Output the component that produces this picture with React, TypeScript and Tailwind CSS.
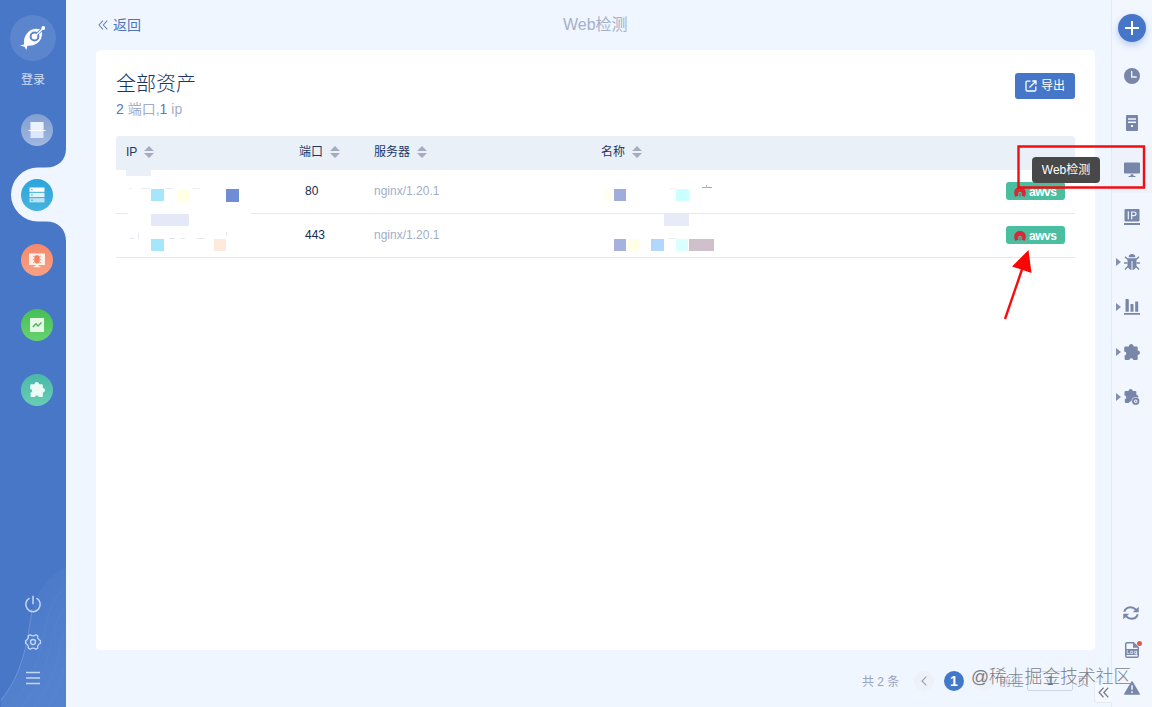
import React from "react";

const FONT =
  "font-['Liberation_Sans','Noto_Sans_CJK_SC',sans-serif]";

const PUZZLE =
  "M1.500 2.400H4.800C5 .9 5.900 0 7.200 0S9.500.9 9.700 2.400H12.500Q13.700 2.400 13.700 3.600V6.500C15.200 6.700 16 7.600 16 8.800S15.200 10.900 13.700 11.100V14.800Q13.700 16 12.500 16H9.300C9.200 15 8.400 14.300 7.300 14.300S5.400 15 5.300 16H1.800Q.6 16 .6 14.800V11.500C1.700 11.300 2.300 10.300 2.200 9.300S1.400 7.600.2 7.500V3.700Q.2 2.400 1.500 2.400Z";

function Svg({ size = 16, className = "", children }: { size?: number; className?: string; children: React.ReactNode }) {
  return (
    <svg width={size} height={size} viewBox="0 0 16 16" className={"shrink-0 " + className} fill="currentColor">
      {children}
    </svg>
  );
}

function DoubleLeft({ size = 10 }: { size?: number }) {
  return (
    <svg width={size} height={size} viewBox="0 0 10 10" fill="none" stroke="currentColor" strokeWidth="1.100">
      <path d="M5 .7L1 5l4 4.300M9.300.7L5.300 5l4 4.300" />
    </svg>
  );
}

function Sorter() {
  return (
    <svg width="10" height="12" viewBox="0 0 10 12" fill="#a3adbf">
      <path d="M5 0L10 5H0ZM5 12L0 7H10Z" />
    </svg>
  );
}

function NavItem({ tone, children }: { tone: string; children: React.ReactNode }) {
  return (
    <div className="flex h-[65px] items-center justify-center pl-2">
      <div className={"relative flex size-8 items-center justify-center rounded-full " + tone}>{children}</div>
    </div>
  );
}

function Sidebar() {
  return (
    <aside className="relative flex w-[66px] shrink-0 flex-col overflow-hidden bg-[#4877c7]">
      <svg className="absolute bottom-0 left-0" width="66" height="150" viewBox="0 0 66 150">
        <defs>
          <linearGradient id="wave" x1="0" y1="0" x2=".4" y2="1">
            <stop offset="0" stopColor="#6f9be0" stopOpacity="0" />
            <stop offset="1" stopColor="#6f9be0" stopOpacity=".3" />
          </linearGradient>
        </defs>
        <path d="M66 10C48 20 37 34 32 55C26 94 19 122 1 142V150H66Z" fill="url(#wave)" />
        <path d="M32 52C27 92 20 120 1 143" fill="none" stroke="#86aae6" strokeOpacity=".5" />
        <g fill="none" stroke="#85aae5" strokeOpacity=".1">
          <path d="M66 30C48 42 45 74 40 95S25 132 9 150M66 50C54 60 52 87 46 106S32 137 22 150M66 72C59 87 58 108 51 122S41 141 34 150M66 98C64 118 58 136 48 150" />
        </g>
      </svg>
      <div className="flex h-[97px] flex-col items-center pt-[15px]">
        <div className="flex size-[46px] shrink-0 items-center justify-center rounded-full bg-[#5b85cd] text-white">
          <svg width="28" height="28" viewBox="0 0 28 28" fill="none">
            <path d="M5 20.500C4 11.500 10 5 16.500 4.700Q19 4.500 22.500 6Q24 10 22.300 14C20 19.500 14 22.500 8.500 21.500L7.300 26L5.500 22.800L1 21.600Z" fill="white" />
            <circle cx="15.500" cy="12.500" r="3.900" stroke="#5b85cd" strokeWidth="2" />
            <path d="M18 10L22.500 6" stroke="#5b85cd" strokeWidth="3" />
            <path d="M17.500 10.700L24 4.500" stroke="white" strokeWidth="1.200" />
            <circle cx="24.300" cy="4" r="1.900" fill="white" />
          </svg>
        </div>
        <span className="mt-[9px] text-xs leading-[20px] text-[#d2e0f7]">登录</span>
      </div>
      <NavItem tone="bg-linear-to-b from-[#829fd2] to-[#a1b8de]">
        <svg width="18" height="18" viewBox="0 0 18 18">
          <path d="M2.500 1h13v16H2.500Z" fill="#dbe8ff" />
          <path d="M2.500 1h13v7.500H2.500Z" fill="white" fillOpacity=".45" />
          <path d="M.500 9.500h17" stroke="white" strokeWidth="1" />
        </svg>
      </NavItem>
      <div className="relative flex h-[65px] items-center justify-center pl-2">
        <svg className="absolute left-0 top-[-13px]" width="66" height="92" viewBox="0 0 66 92">
          <path d="M66 0C66 11 58 18.500 46 18.500H38A27 27 0 0 0 38 72.500H46C58 72.500 66 80 66 92Z" fill="#f0f6ff" />
        </svg>
        <div className="relative flex size-8 items-center justify-center rounded-full bg-linear-to-b from-[#29a5dc] to-[#45b3dd]">
          <Svg className="text-white">
            <path d="M.5.500h15v4.300H.5Z" />
            <path d="M.5 5.800h15v4.300H.5Z" fillOpacity=".85" />
            <path d="M.5 11.100h15v4.300H.5Z" fillOpacity=".65" />
            <path d="M2.300 2h1.300v1.300H2.300ZM2.300 7.300h1.300v1.300H2.300ZM2.300 12.600h1.300v1.300H2.300Z" fill="#36acdb" />
          </Svg>
        </div>
      </div>
      <NavItem tone="bg-linear-to-b from-[#f58a6b] to-[#f7a084]">
        <Svg className="text-[#fff1ea]">
          <path d="M0 1.500h16v11.500H9.500v1.200h2v1H4.500v-1h2V13H0Z" />
          <g stroke="#f5916f" fill="none" strokeWidth=".8">
            <path d="M4 3.800l1.500 1.200M12 3.800l-1.500 1.200M3.700 7.500h1.800M10.500 7.500h1.800M4 11l1.700-1.300M12 11l-1.700-1.300" />
          </g>
          <path d="M5.300 4.800C5.300 2.800 10.700 2.800 10.700 4.800V9.500C10 12.200 6 12.200 5.300 9.500Z" fill="#f28361" />
        </Svg>
      </NavItem>
      <NavItem tone="bg-linear-to-b from-[#46bf55] to-[#66d26f]">
        <svg width="14" height="14" viewBox="0 0 14 14">
          <path d="M0 0h14v14H0Z" fill="#e6f8e8" />
          <path d="M2.800 9L6 5.700L8 8L11.500 4.500" stroke="#43b854" strokeWidth="1.300" fill="none" />
        </svg>
      </NavItem>
      <NavItem tone="bg-linear-to-b from-[#49b8aa] to-[#68cdb4]">
        <Svg size={15} className="text-[#ecfbf6]">
          <path d={PUZZLE} />
        </Svg>
      </NavItem>
      <div className="relative mt-auto flex flex-col items-center text-[#c4d8f6]">
        <svg className="mb-[20px]" width="18" height="18" viewBox="0 0 18 18" fill="none" stroke="currentColor" strokeWidth="1.500">
          <path d="M5.500 3.200A7.200 7.200 0 1 0 12.500 3.200M9 .8v8.400" />
        </svg>
        <svg className="mb-[20px]" width="18" height="18" viewBox="0 0 18 18" fill="none" stroke="currentColor" strokeWidth="1.300">
          <path d="M6.200 1.800Q9 4 11.800 1.800L13.700 2.900Q13.200 6.300 16.400 7.500V10.500Q13.200 11.700 13.700 15.100L11.800 16.200Q9 14 6.200 16.200L4.300 15.100Q4.800 11.700 1.600 10.500V7.500Q4.800 6.300 4.300 2.900Z" strokeLinejoin="round" />
          <circle cx="9" cy="9" r="2.500" />
        </svg>
        <svg className="mb-[22px]" width="14" height="14" viewBox="0 0 14 14" fill="none" stroke="currentColor" strokeWidth="1.300">
          <path d="M0 1.500h14M0 7h14M0 12.500h14" />
        </svg>
      </div>
    </aside>
  );
}

function Awvs() {
  return (
    <div className="flex h-[18px] w-[59px] items-center gap-[3px] rounded-[3px] bg-[#49bea0] pl-2 pt-[2px] text-xs font-bold text-white">
      <svg width="12" height="10" viewBox="0 0 12 10" className="shrink-0">
        <path d="M1.200 9.800C-1.500 4 1.500 0 6 0S13.500 4 10.800 9.800L7.600 8.800C8.300 6.500 7.700 4.800 6 4.800S3.700 6.500 4.400 8.800Z" fill="#d72a38" />
        <path d="M5.500 6h1v3.500h-1Z" fill="#bd4350" />
      </svg>
      <span className="font-['Liberation_Sans',sans-serif] leading-[16px] tracking-[-0.5px]">awvs</span>
    </div>
  );
}

function Head({ label, gap = "gap-[7px]" }: { label: string; gap?: string }) {
  return (
    <div className={"flex items-center pl-[10px] pb-[2px] text-xs text-[#1d3764] " + gap}>
      {label}
      <Sorter />
    </div>
  );
}

type Block = { x: number; y: number; w: number; h: number; c: string };

function Row({ port, blocks, last }: { port: string; blocks: Block[]; last?: boolean }) {
  return (
    <div className="relative grid h-[44px] grid-cols-[173px_75px_227px_405px_1fr] items-center border-b border-[#e5e8ed] text-xs">
      {!last && <i className="absolute left-[12px] top-[43px] h-px w-[123px] bg-white" />}
      {blocks.map((b, i) => (
        <i key={i} className="absolute" style={{ left: b.x - 116, top: b.y, width: b.w, height: b.h, background: b.c }} />
      ))}
      <span />
      <span className="pb-[2px] pl-4 text-[#142a50]">{port}</span>
      <span className="pb-[2px] pl-[10px] text-[#a2aec7]">nginx/1.20.1</span>
      <span />
      <div className="pb-px pl-[10px]">
        <Awvs />
      </div>
    </div>
  );
}

const ROW_ONE: Block[] = [
  { x: 126, y: 0, w: 25, h: 6, c: "#ebf0f8" },
  { x: 129, y: 18, w: 3, h: 1, c: "#eceef2" },
  { x: 141, y: 18, w: 9, h: 1, c: "#e8ecf2" },
  { x: 166, y: 18, w: 7, h: 1, c: "#e4e9f0" },
  { x: 193, y: 18, w: 7, h: 1, c: "#ebecee" },
  { x: 151, y: 19, w: 13, h: 12, c: "#a6e6fc" },
  { x: 177, y: 19, w: 12, h: 12, c: "#ffffe4" },
  { x: 226, y: 19, w: 13, h: 13, c: "#708cd5" },
  { x: 603, y: 19, w: 10, h: 12, c: "#fffff0" },
  { x: 614, y: 19, w: 12, h: 12, c: "#a0acdc" },
  { x: 669, y: 18, w: 6, h: 1, c: "#f0f2f4" },
  { x: 676, y: 19, w: 13, h: 12, c: "#ccffff" },
  { x: 702, y: 17, w: 10, h: 1, c: "#9eaac2" },
  { x: 706, y: 15, w: 1, h: 3, c: "#bcc5d6" },
];

const ROW_TWO: Block[] = [
  { x: 151, y: 0, w: 38, h: 12, c: "#e5e9f7" },
  { x: 129, y: 24, w: 5, h: 1, c: "#e6eaf0" },
  { x: 138, y: 19, w: 1, h: 6, c: "#e6eaf0" },
  { x: 169, y: 24, w: 6, h: 1, c: "#e0e5ec" },
  { x: 181, y: 24, w: 4, h: 1, c: "#e0e5ec" },
  { x: 197, y: 24, w: 8, h: 1, c: "#e5e9ee" },
  { x: 226, y: 19, w: 1, h: 3, c: "#e5e9ee" },
  { x: 151, y: 25, w: 13, h: 12, c: "#a6e6fc" },
  { x: 214, y: 25, w: 12, h: 12, c: "#fdeadd" },
  { x: 664, y: 0, w: 25, h: 12, c: "#e7eaf7" },
  { x: 614, y: 25, w: 12, h: 12, c: "#a7b1de" },
  { x: 627, y: 25, w: 12, h: 12, c: "#ffffe6" },
  { x: 651, y: 25, w: 13, h: 12, c: "#b2d7fe" },
  { x: 668, y: 24, w: 8, h: 1, c: "#eceef0" },
  { x: 676, y: 25, w: 12, h: 12, c: "#d9ffff" },
  { x: 689, y: 25, w: 25, h: 12, c: "#d0c0cb" },
];

function Main() {
  return (
    <main className="flex w-[1045px] shrink-0 flex-col pl-[30px]">
      <header className="flex h-[50px] items-center gap-[5px] pl-[2px] text-sm text-[#6a83bc]">
        <DoubleLeft />
        <span className="text-[#4f73bd]">返回</span>
        <h1 className="ml-[417px] text-base text-[#a3b0ca]">Web检测</h1>
      </header>
      <section className="mr-4 flex h-[600px] flex-col rounded-sm bg-white px-5">
        <div className="flex h-[86px] items-start justify-between">
          <div className="pt-[20px]">
            <h2 className="text-xl font-light leading-7 text-[#183463]">全部资产</h2>
            <p className="text-sm leading-[22px] text-[#a2adca]">
              <span className="text-[#5879be]">2</span> 端口,<span className="text-[#5879be]">1</span> ip
            </p>
          </div>
          <button className="mt-[23px] flex h-[26px] w-[60px] items-center justify-center gap-1 rounded-[3px] bg-[#4576c7] text-xs text-white">
            <svg width="12" height="12" viewBox="0 0 12 12" fill="none" stroke="white" strokeWidth="1.300">
              <path d="M5.500 1.200H2.200Q1 1.200 1 2.400V9.800Q1 11 2.200 11H9.600Q10.800 11 10.800 9.800V6.500M4.500 7.500L10.500 1.500M7.300 1H11V4.700" />
            </svg>
            导出
          </button>
        </div>
        <div className="grid h-[34px] grid-cols-[173px_75px_227px_405px_1fr] items-center rounded-t-[3px] bg-[#eaf0f7]">
          <Head label="IP" />
          <Head label="端口" />
          <Head label="服务器" />
          <Head label="名称" />
        </div>
        <Row port="80" blocks={ROW_ONE} />
        <Row port="443" blocks={ROW_TWO} last />
      </section>
      <footer className="flex h-[57px] items-center pl-[766px] pt-[5px] text-xs text-[#98a4be]">
        <span className="w-[52px] whitespace-nowrap pt-[2px]">共 2 条</span>
        <span className="flex size-5 items-center justify-center rounded-full bg-[#edf1f8]">
          <svg width="6" height="10" viewBox="0 0 6 10" fill="none" stroke="#9aa5bb" strokeWidth="1.200">
            <path d="M5.300.7L1 5l4.300 4.300" />
          </svg>
        </span>
        <span className="ml-[10px] flex size-5 items-center justify-center rounded-full bg-[#4377c8] text-sm font-bold text-white">1</span>
        <span className="ml-[10px] flex size-5 items-center justify-center rounded-full bg-[#edf1f8]">
          <svg width="6" height="10" viewBox="0 0 6 10" fill="none" stroke="#bbc4d3" strokeWidth="1.200">
            <path d="M.7.700L5 5L.7 9.300" />
          </svg>
        </span>
        <span className="ml-[5px] w-[28px] pt-[2px]">前往</span>
        <span className="flex h-[20px] w-[46px] items-center justify-center rounded-[2px] border border-[#cdd6e5] text-[#48556f]">1</span>
        <span className="ml-1 pt-[2px]">页</span>
      </footer>
    </main>
  );
}

function RailItem({ h = "h-[47px]", arrow, active, children }: { h?: string; arrow?: boolean; active?: boolean; children: React.ReactNode }) {
  return (
    <div className={"flex w-full items-center pl-1 " + h + (active ? " bg-[#edf2fb]" : "")}>
      <span className="flex w-[8px] shrink-0">
        {arrow && (
          <svg width="5" height="8" viewBox="0 0 5 8" fill="#8490b0">
            <path d="M0 0L5 4L0 8Z" />
          </svg>
        )}
      </span>
      {children}
    </div>
  );
}

function Rail() {
  return (
    <nav className="flex w-[41px] shrink-0 flex-col border-l border-[#e3eaf6] bg-[#f1f6ff] text-[#7886a9]">
      <div className="flex h-[52px] pl-[6px] pt-[14px]">
        <button className="flex size-7 items-center justify-center rounded-full bg-[#4576c8] shadow-[0_3px_7px_#b7c9ed]">
          <svg width="14" height="14" viewBox="0 0 14 14" stroke="white" strokeWidth="2">
            <path d="M0 7h14M7 0v14" />
          </svg>
        </button>
      </div>
      <RailItem>
        <Svg>
          <circle cx="8" cy="8" r="8" />
          <path d="M7.700 3v6h5" fill="none" stroke="#f2f6ff" strokeWidth="1.300" />
        </Svg>
      </RailItem>
      <RailItem>
        <Svg>
          <path d="M3 0h10q1 0 1 1v14q0 1-1 1H3q-1 0-1-1V1q0-1 1-1Z" />
          <path d="M4 4h8M4 7.300h8" stroke="#f2f6ff" strokeWidth="1.400" />
          <path d="M7 10h2v2H7Z" fill="#f2f6ff" />
        </Svg>
      </RailItem>
      <RailItem active>
        <Svg>
          <path d="M.8.500h14.400q.8 0 .8.800v9.400q0 .8-.8.800H.8q-.8 0-.8-.8V1.300Q0 .500.8.500ZM6.800 12.300h2.400v1.300l2.300.7v.8h-7v-.8l2.300-.7Z" />
        </Svg>
      </RailItem>
      <RailItem>
        <Svg>
          <path d="M1.500 0h13q1 0 1 1v10.500q0 1-1 1h-13q-1 0-1-1V1q0-1 1-1ZM0 14h16v2H0Z" />
          <path d="M4.300 2.300v7.900M7.700 10.300V3h2.300q2 0 2 1.800t-2 1.800H7.700" fill="none" stroke="#f2f6ff" strokeWidth="1.200" />
        </Svg>
      </RailItem>
      <RailItem h="h-[44px]" arrow>
        <Svg>
          <path d="M4.700 3.300A3.300 3.300 0 0 1 11.300 3.300ZM3.500 4.300h9V11Q12 15.500 8.500 16V7h-1v9Q4 15.500 3.500 11Z" />
          <path d="M1 2.700l3 2.800M15 2.700l-3 2.800M0 9h3.500M12.500 9H16M1 15.500l3-3.200M15 15.500l-3-3.200" stroke="currentColor" strokeWidth="1.400" />
        </Svg>
      </RailItem>
      <RailItem h="h-[45px]" arrow>
        <Svg>
          <path d="M1.500 0H4q.8 0 .8.800V12.800H1.500ZM6.500 5h2.200q.8 0 .8.800v7H6.500ZM11.200 2.500h2.200q.8 0 .8.800v9.500h-3ZM0 14h16v1.800H0Z" />
        </Svg>
      </RailItem>
      <RailItem h="h-[45px]" arrow>
        <Svg>
          <path d={PUZZLE} />
        </Svg>
      </RailItem>
      <RailItem h="h-[45px]" arrow>
        <Svg>
          <path d={PUZZLE} transform="translate(.3 0) scale(.88)" />
          <circle cx="11.700" cy="12.200" r="4.300" fill="#f2f6ff" />
          <circle cx="11.700" cy="12.200" r="2.700" fill="none" stroke="currentColor" strokeWidth="1.900" />
          <circle cx="11.700" cy="12.200" r=".8" />
        </Svg>
      </RailItem>
      <div className="mt-auto">
        <RailItem h="h-[37px]">
          <Svg className="-ml-px">
            <path d="M1.300 6.800Q2.500 2.300 7.500 2.200Q10.500 2.200 13 4.700M14.700 9.200Q13.500 13.700 8.500 13.800Q5.500 13.800 3 11.300" fill="none" stroke="currentColor" strokeWidth="2" />
            <path d="M15.700 1.700v5.600H9.700ZM.300 14.300V8.700h6Z" />
          </Svg>
        </RailItem>
        <RailItem h="h-[38px]">
          <div className="relative">
            <Svg>
              <path d="M9.500.8H3Q1.700.8 1.700 2v12Q1.700 15.200 3 15.200h10q1.300 0 1.300-1.200V5.500Z" fill="none" stroke="currentColor" strokeWidth="1.400" />
              <path d="M9 .800v5h5.300ZM1 7h14v6H1Z" />
              <path d="M3.200 8v3.500h2.300M6.700 9.200h2v2.300h-2ZM12.700 9.200h-2v2.300h2V9.200v4h-2.500" fill="none" stroke="#e5ebf7" strokeWidth=".8" />
            </Svg>
            <i className="absolute -right-[2px] -top-[1px] size-[5px] rounded-full bg-[#e4574c]" />
          </div>
        </RailItem>
        <RailItem h="h-[38px]">
          <Svg>
            <path d="M8 1.200q.6 0 1 .7l6.700 11.600q.6 1.200-.7 1.300H1q-1.300-.1-.7-1.300L7 1.900q.4-.7 1-.7Z" />
            <path d="M8 5.300v4.500M8 11.300V13" stroke="#f2f6ff" strokeWidth="1.500" />
          </Svg>
        </RailItem>
      </div>
    </nav>
  );
}

export default function App() {
  return (
    <div className={"relative flex h-[707px] w-[1152px] overflow-hidden bg-[#f0f6ff] " + FONT}>
      <Sidebar />
      <Main />
      <Rail />
      <div className="absolute left-[1094px] top-[681px] flex h-[22px] w-[18px] items-center justify-center rounded-l border border-r-0 border-[#e6eaf2] bg-[#f5f8ff] text-[#717b91]">
        <DoubleLeft size={11} />
      </div>
      <div className="absolute left-[1032px] top-[157px] flex h-[26px] w-[68px] items-center justify-center whitespace-nowrap rounded bg-[#484848] text-xs text-white">
        Web检测
      </div>
      <svg className="pointer-events-none absolute left-[1000px] top-[140px]" width="152" height="185" viewBox="1000 140 152 185">
        <path d="M1018.500 146.500h125.500v41h-125.500Z" fill="none" stroke="#f20d12" strokeWidth="2.400" />
        <path d="M1005 319L1022.500 268" stroke="#f60d0d" strokeWidth="2.400" />
        <path d="M1028.500 250L1012 266.500L1031.500 273Z" fill="#f90505" />
      </svg>
      <div className="pointer-events-none absolute left-[971px] top-[664px] whitespace-nowrap text-[17.8px] font-light leading-[26px] text-[#6e7178] opacity-90 [text-shadow:0_0_2px_white]">
        @稀土掘金技术社区
      </div>
    </div>
  );
}
